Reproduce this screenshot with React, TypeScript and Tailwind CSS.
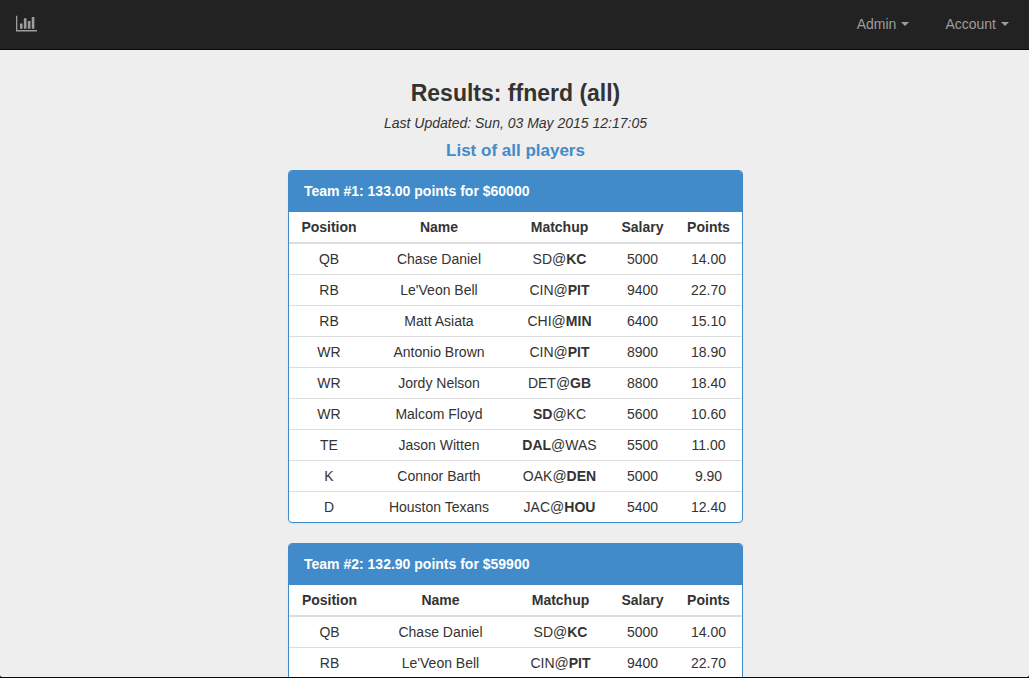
import React from "react";

type Player = {
  position: string;
  name: string;
  away: string;
  home: string;
  team: "away" | "home";
  salary: string;
  points: string;
};

type Team = {
  id: number;
  points: string;
  salary: string;
  columns: number[];
  players: Player[];
};

const teams: Team[] = [
  {
    id: 1,
    points: "133.00",
    salary: "60000",
    columns: [80, 140, 101, 65, 67],
    players: [
      { position: "QB", name: "Chase Daniel", away: "SD", home: "KC", team: "home", salary: "5000", points: "14.00" },
      { position: "RB", name: "Le'Veon Bell", away: "CIN", home: "PIT", team: "home", salary: "9400", points: "22.70" },
      { position: "RB", name: "Matt Asiata", away: "CHI", home: "MIN", team: "home", salary: "6400", points: "15.10" },
      { position: "WR", name: "Antonio Brown", away: "CIN", home: "PIT", team: "home", salary: "8900", points: "18.90" },
      { position: "WR", name: "Jordy Nelson", away: "DET", home: "GB", team: "home", salary: "8800", points: "18.40" },
      { position: "WR", name: "Malcom Floyd", away: "SD", home: "KC", team: "away", salary: "5600", points: "10.60" },
      { position: "TE", name: "Jason Witten", away: "DAL", home: "WAS", team: "away", salary: "5500", points: "11.00" },
      { position: "K", name: "Connor Barth", away: "OAK", home: "DEN", team: "home", salary: "5000", points: "9.90" },
      { position: "D", name: "Houston Texans", away: "JAC", home: "HOU", team: "home", salary: "5400", points: "12.40" },
    ],
  },
  {
    id: 2,
    points: "132.90",
    salary: "59900",
    columns: [81, 141, 99, 65, 67],
    players: [
      { position: "QB", name: "Chase Daniel", away: "SD", home: "KC", team: "home", salary: "5000", points: "14.00" },
      { position: "RB", name: "Le'Veon Bell", away: "CIN", home: "PIT", team: "home", salary: "9400", points: "22.70" },
    ],
  },
];

const headings = ["Position", "Name", "Matchup", "Salary", "Points"];

function ChartIcon() {
  return (
    <svg viewBox="0 0 2048 1792" className="h-[19px] w-[21px]" fill="currentColor" aria-hidden="true">
      <path d="M640 896v512h-256v-512h256zm384-512v1024h-256v-1024h256zm1024 1152v128h-2048v-1536h128v1408h1920zm-640-896v768h-256v-768h256zm384-384v1152h-256v-1152h256z" />
    </svg>
  );
}

function NavMenu({ label }: { label: string }) {
  return (
    <button type="button" className="flex items-center gap-[5px] leading-5 text-[#9d9d9d]">
      {label}
      <svg viewBox="0 0 8 4" className="h-1 w-2" fill="currentColor" aria-hidden="true">
        <path d="M0 0h8L4 4z" />
      </svg>
    </button>
  );
}

function Navbar() {
  return (
    <nav className="flex h-[50px] shrink-0 items-center justify-between border-b border-[#080808] bg-[#222] pr-5 pb-0.5 pl-4">
      <a href="#" aria-label="Home" className="text-[#9d9d9d]">
        <ChartIcon />
      </a>
      <div className="flex gap-9">
        <NavMenu label="Admin" />
        <NavMenu label="Account" />
      </div>
    </nav>
  );
}

function TeamPanel({ team }: { team: Team }) {
  const total = team.columns.reduce((sum, width) => sum + width, 0);
  return (
    <section className="mb-5 overflow-hidden rounded-t border border-[#428bca] bg-white shadow-xs first-of-type:rounded-b">
      <h3 className="bg-[#428bca] px-[15px] pt-2.5 pb-[11px] leading-5 font-bold text-white">
        Team #{team.id}: {team.points} points for ${team.salary}
      </h3>
      <table className="w-full table-fixed border-separate border-spacing-0 text-center leading-5">
        <colgroup>
          {team.columns.map((width, i) => (
            <col key={headings[i]} style={{ width: `${(width / total) * 100}%` }} />
          ))}
        </colgroup>
        <thead>
          <tr>
            {headings.map((heading) => (
              <th key={heading} scope="col" className="border-b-2 border-[#ddd] py-[5px] font-bold">
                {heading}
              </th>
            ))}
          </tr>
        </thead>
        <tbody className="[&>tr+tr>td]:border-t [&>tr+tr>td]:border-[#ddd]">
          {team.players.map((player) => (
            <tr key={player.name}>
              <td className="py-[5px]">{player.position}</td>
              <td className="py-[5px]">{player.name}</td>
              <td className="py-[5px]">
                {player.team === "away" ? <strong>{player.away}</strong> : player.away}@
                {player.team === "home" ? <strong>{player.home}</strong> : player.home}
              </td>
              <td className="py-[5px]">{player.salary}</td>
              <td className="py-[5px]">{player.points}</td>
            </tr>
          ))}
        </tbody>
      </table>
    </section>
  );
}

export default function App() {
  return (
    <div className="flex h-screen flex-col bg-[#05090d] pb-px">
      <div className="flex min-h-0 flex-1 flex-col overflow-hidden rounded-b-xs bg-[#eee] font-['Liberation_Sans',Arial,sans-serif] text-sm text-[#333]">
        <Navbar />
        <main className="w-full pt-[30px] pl-0.5">
          <div className="mx-auto w-full max-w-[455px]">
            <header className="mb-[9px] flex flex-col items-center text-center">
              <h1 className="text-[23px] leading-[26px] font-bold">Results: ffnerd (all)</h1>
              <p className="mt-[7px] leading-5 italic">Last Updated: Sun, 03 May 2015 12:17:05</p>
              <a href="#" className="mt-2 text-[17px] leading-5 font-bold text-[#428bca]">
                List of all players
              </a>
            </header>
            {teams.map((team) => (
              <TeamPanel key={team.id} team={team} />
            ))}
          </div>
        </main>
      </div>
    </div>
  );
}
